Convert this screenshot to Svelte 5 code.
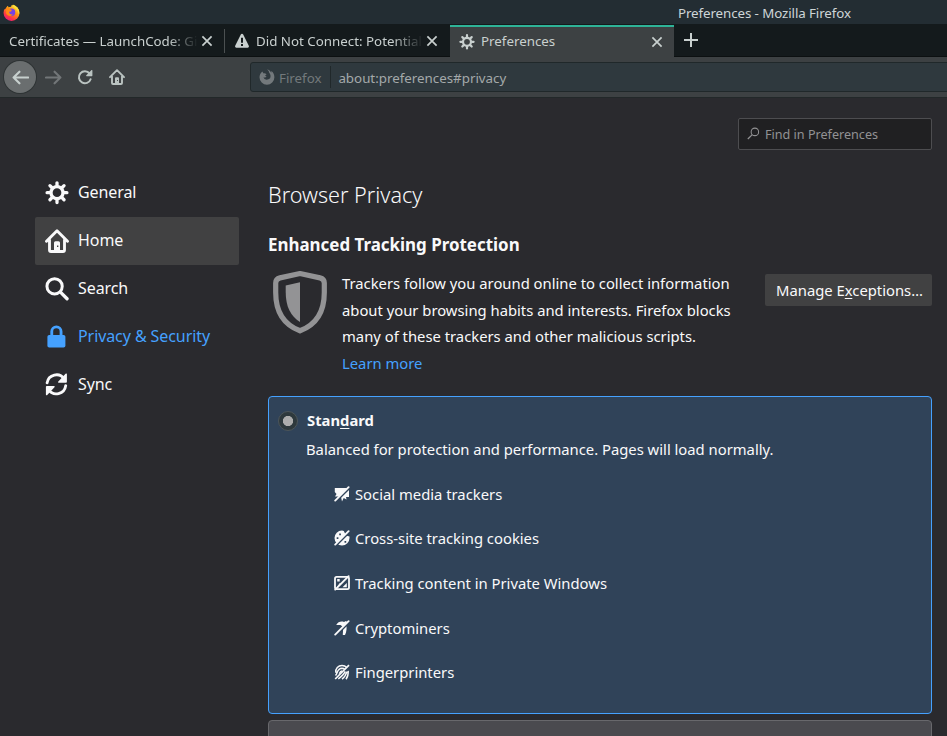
<script>
  const tabs = [
    { title: 'Certificates — LaunchCode: Gi', icon: null, active: false },
    { title: 'Did Not Connect: Potential', icon: 'warning', active: false },
    { title: 'Preferences', icon: 'gear', active: true }
  ];
  const categories = [
    { label: 'General', icon: 'gear' },
    { label: 'Home', icon: 'home', hover: true },
    { label: 'Search', icon: 'search' },
    { label: 'Privacy & Security', icon: 'lock', selected: true },
    { label: 'Sync', icon: 'sync' }
  ];
  const blocked = [
    { label: 'Social media trackers', icon: 'social' },
    { label: 'Cross-site tracking cookies', icon: 'cookie' },
    { label: 'Tracking content in Private Windows', icon: 'content' },
    { label: 'Cryptominers', icon: 'miner' },
    { label: 'Fingerprinters', icon: 'finger' }
  ];
</script>

{#snippet slash()}
  <path d="M15.900 1.300L1.900 15.300" stroke="#304359" stroke-width="2.400" />
  <path d="M14.600 1.200L1.200 14.600" stroke="currentColor" stroke-width="1.900" stroke-linecap="round" />
{/snippet}

{#snippet icon(name, size)}
  <svg class="icon" width={size} height={size} viewBox="0 0 16 16" fill="currentColor" stroke="none">
    {#if name === 'gear'}
      <circle cx="8" cy="7.800" r="4" fill="none" stroke="currentColor" stroke-width="2.200" />
      <path d="M8 1.200v2M8 12.400v2M1.400 7.800h2M12.600 7.800h2M3.300 3.100l1.400 1.400M11.300 11.100l1.400 1.400M3.300 12.500l1.400-1.400M11.300 4.500l1.400-1.400" stroke="currentColor" stroke-width="2.200" stroke-linecap="round" />
    {:else if name === 'home'}
      <path d="M1 8.2L8 1.2l7 7M3 7.2V14a1 1 0 0 0 1 1h8a1 1 0 0 0 1-1V7.2" fill="none" stroke="currentColor" stroke-width="1.9" stroke-linecap="round" stroke-linejoin="round" />
      <path fill-rule="evenodd" d="M6 15V9.2a1 1 0 0 1 1-1h2a1 1 0 0 1 1 1V15zM8 11v1h.9v-1z" />
    {:else if name === 'search'}
      <circle cx="6.4" cy="6.200" r="5.1" fill="none" stroke="currentColor" stroke-width="2" />
      <path d="M10.3 10.1l4.400 4.400" stroke="currentColor" stroke-width="2.2" stroke-linecap="round" />
    {:else if name === 'lock'}
      <path d="M7.700 0" />
      <path d="M4.500 7.600V4.300a3.100 3.100 0 0 1 6.200 0V7.600" fill="none" stroke="currentColor" stroke-width="1.9" />
      <rect x="1.600" y="6.700" width="12" height="8.300" rx="1.2" />
    {:else if name === 'sync'}
      <path d="M1.4 6.600A6.300 6.300 0 0 1 12.800 3.900M13.800 8.400A6.300 6.300 0 0 1 2.400 11.200" fill="none" stroke="currentColor" stroke-width="1.9" stroke-linecap="round" />
      <path d="M14.600.8v5.100a.6.6 0 0 1-.6.6H9.200a.5.5 0 0 1-.3-.9L13.700.5a.5.5 0 0 1 .9.300zM.6 14.300V9.200A.6.6 0 0 1 1.200 8.600H6a.5.5 0 0 1 .3.9L1.500 14.600a.5.5 0 0 1-.9-.300z" />
    {:else if name === 'warning'}
      <path fill-rule="evenodd" d="M6.8 1.6a1.3 1.3 0 0 1 2.4 0l5.6 11.2a1.3 1.3 0 0 1-1.2 1.9H2.4a1.3 1.3 0 0 1-1.2-1.9zM7 4.8v5h2v-5zM7 11.1v2h2v-2z" />
    {:else if name === 'back'}
      <path d="M7 2.5L1.5 8 7 13.5M1.5 8h13.8" fill="none" stroke="currentColor" stroke-width="2" stroke-linecap="round" stroke-linejoin="round" />
    {:else if name === 'forward'}
      <path d="M9 2.5L14.5 8 9 13.5M14.5 8H.9" fill="none" stroke="currentColor" stroke-width="2" stroke-linecap="round" stroke-linejoin="round" />
    {:else if name === 'reload'}
      <path d="M12.6 4.5A6 6 0 1 0 13.6 10.2" fill="none" stroke="currentColor" stroke-width="2" stroke-linecap="round" />
      <path d="M15.4 1.4V6.6a.6.6 0 0 1-.6.6H9.6a.5.5 0 0 1-.3-.9l5.2-5.2a.5.5 0 0 1 .9.3z" />
    {:else if name === 'close'}
      <path d="M3.4 3.4l9.2 9.2M12.6 3.4l-9.2 9.2" stroke="currentColor" stroke-width="1.7" />
    {:else if name === 'plus'}
      <path d="M8 1v14M1 8h14" stroke="currentColor" stroke-width="2" />
    {:else if name === 'brand'}
      <path d="M8 .6C9.6 1.5 10 2.6 10.2 3.7a4.500 4.500 0 0 1 1.300 2.700 3.700 3.700 0 0 1-7.200 1.600C5.200 9 6.800 8.600 7.500 7.400 5.900 7 5.700 6.200 7.600 5.500 6.700 4.500 5.600 4.200 4.600 4.400L3.300 2.500C1.600 4 .5 6 .5 8.300a7.400 7.400 0 0 0 14.900 0c0-2.700-1.300-5.100-3.100-6.300 0 .7.1 1.300-.1 1.800C11.400 2 10 .8 8 .6z" />
    {:else if name === 'magnify'}
      <circle cx="9.7" cy="6" r="4.6" fill="none" stroke="currentColor" stroke-width="1.3" />
      <path d="M6.5 9.3L1 14.8" stroke="currentColor" stroke-width="1.5" />
    {:else if name === 'social'}
      <path d="M.8 2H13.500L6 10.500H1L2.500 8 .8 6zM15 3.500V11h-3l.5 2.500L9.700 12 8 15.500 7 11z" />
      {@render slash()}
    {:else if name === 'cookie'}
      <path fill-rule="evenodd" d="M8 .500A7.500 7.500 0 1 0 15.500 8V6.500L12 5.500 9.800 1zM5.200 3.600V5.300H6.900V3.600zM2.700 7.200V8.900H4.400V7.200zM10.500 11v1.700h1.700v-1.700z" />
      {@render slash()}
    {:else if name === 'content'}
      <path d="M3.200 4h2.500v2.400H3.200zM3 12l3-4.300 1.600 1.600L5 12zM8.500 12.300l4.300-4.300v4.300z" />
      {@render slash()}
      <rect x="1" y="1.800" width="14" height="12.400" rx="1.600" fill="none" stroke="currentColor" stroke-width="1.800" />
    {:else if name === 'miner'}
      <path d="M2.200 5C4 1.800 7 1 10 2l2-.9 1.500 1.400-3.500 5L6.500 5z" />
      <path d="M9.200 6.500l3-2c.7 3.500.5 7-1.200 10.500H8.800z" />
      {@render slash()}
    {:else if name === 'finger'}
      <path d="M1.8 8.6C1.3 4.5 4.2 1.4 8 1.4c2 0 3.600.8 4.800 2.100M1.500 11.400C3.800 9 3 4.500 8 4.300c1.100 0 2 .4 2.600 1M5.400 9.800C6 8.200 6.200 7 8 7M4.300 14.900C8.200 12 10.200 9.800 11.200 7.400M8 15.200c2.500-1.800 4-4.500 4.800-7.600M12 15.300c1.600-2.200 2.400-5 2.200-8.400" fill="none" stroke="currentColor" stroke-width="1.500" />
      <path d="M15 1.200L1.200 15" stroke="currentColor" stroke-width="1.700" />
    {/if}
  </svg>
{/snippet}

<div class="window">
  <header class="titlebar">
    <svg class="logo" width="17" height="17" viewBox="0 0 16 16">
      <defs>
        <linearGradient id="flame" x1=".85" y1="0" x2=".2" y2="1">
          <stop offset="0" stop-color="#fff44f" /><stop offset=".4" stop-color="#ff980e" />
          <stop offset=".75" stop-color="#ff3647" /><stop offset="1" stop-color="#e31587" />
        </linearGradient>
      </defs>
      <circle cx="8" cy="8.4" r="7.5" fill="url(#flame)" />
      <path d="M0 0h4.2L3 4 1 5zM4.5 0h4L7.6 2.5 5 3z" fill="#232d33" />
      <circle cx="8" cy="7.8" r="3.5" fill="#7542e5" />
      <path d="M3 3.2c1.4.4 2 .4 3.2 1.5L8.3 5.5 7.7 7 5.8 7.3c0 2 1.5 3 3.5 2.5-1.5 2-5 2-6.4-1z" fill="#ff8a16" />
      <path d="M9.2.4c4.2 1.5 6.7 5 6 9.4-.5-1-1-3-2-4.2C12.4 4 9.4 3.5 9.2.4z" fill="#ffde38" />
    </svg>
    <span>Preferences - Mozilla Firefox</span>
  </header>

  <div class="tabs">
    {#each tabs as tab}
      <div class="tab" class:active={tab.active}>
        {#if tab.icon}{@render icon(tab.icon, 16)}{/if}
        <span class="tab-title">{tab.title}</span>
        <span class="close">{@render icon('close', 16)}</span>
      </div>
    {/each}
    <div class="newtab">{@render icon('plus', 16)}</div>
  </div>

  <nav class="toolbar">
    <div class="back">{@render icon('back', 17)}</div>
    <div class="forward">{@render icon('forward', 17)}</div>
    <div class="tool">{@render icon('reload', 16)}</div>
    <div class="tool">{@render icon('home', 16)}</div>
    <div class="urlbar">
      <div class="identity">{@render icon('brand', 16)}<span>Firefox</span></div>
      <span class="url">about:preferences#privacy</span>
    </div>
  </nav>

  <div class="page">
    <aside>
      {#each categories as c}
        <div class="category" class:hover={c.hover} class:selected={c.selected}>
          {@render icon(c.icon, 24)}<span>{c.label}</span>
        </div>
      {/each}
    </aside>
    <main>
      <div class="find">{@render icon('magnify', 13)}<span>Find in Preferences</span></div>
      <h1>Browser Privacy</h1>
      <h2>Enhanced Tracking Protection</h2>
      <section class="intro">
        <svg width="54" height="64" viewBox="0 0 54 64" fill="#939395">
          <path d="M27 3.500L47 7.900Q51.300 8.900 51.300 13V22.500C51.300 42.500 42.500 55 27 60.800 11.500 55 2.700 42.500 2.700 22.500V13Q2.700 8.900 7 7.900Z" fill="none" stroke="#939395" stroke-width="5.200" stroke-linejoin="round" />
          <path d="M27 12.300L12.700 15.500V22C12.700 37 18 46.500 27 52z" />
        </svg>
        <p>
          Trackers follow you around online to collect information<br />
          about your browsing habits and interests. Firefox blocks<br />
          many of these trackers and other malicious scripts.<br />
          <a href="#learn">Learn more</a>
        </p>
        <button>Manage E<u>x</u>ceptions…</button>
      </section>
      <section class="card">
        <div class="option"><span class="radio"></span><strong>Stan<u>d</u>ard</strong></div>
        <div class="summary">Balanced for protection and performance. Pages will load normally.</div>
        <ul>
          {#each blocked as b}
            <li>{@render icon(b.icon, 16)}<span>{b.label}</span></li>
          {/each}
        </ul>
      </section>
      <section class="card next"></section>
    </main>
  </div>
</div>

<style>
  .window {
    width: 947px;
    height: 736px;
    overflow: hidden;
    display: flex;
    flex-direction: column;
    background: #2a2a2e;
    color: #f9f9fa;
    font-family: 'Noto Sans', sans-serif;
    font-size: 14.8px;
    white-space: nowrap;
  }
  .window * { box-sizing: border-box; }
  .icon { flex: none; display: block; }
  .titlebar {
    height: 24px;
    flex: none;
    display: flex;
    align-items: center;
    padding: 1px 0 0 3px;
    background: #232d33;
    color: #ced5d7;
    font-size: 13.33px;
    letter-spacing: -.09px;
  }
  .logo { margin-right: 658px; flex: none; }
  .tabs {
    height: 33px;
    flex: none;
    display: flex;
    background: #141a1c;
    border-bottom: 1px solid #0c1011;
    color: #c9d0cf;
    font-size: 13.33px;
  }
  .tab {
    width: 225px;
    flex: none;
    height: 33px;
    display: flex;
    align-items: center;
    padding: 2px 10px 0 9px;
    gap: 6px;
    position: relative;
  }
  .tab:first-child::after {
    content: '';
    position: absolute;
    right: 0;
    top: 5px;
    width: 1px;
    height: 24px;
    background: #4b5051;
  }
  .tab.active {
    width: 224px;
    background: #3d4143;
    border-top: 2px solid #2eb398;
    margin-top: 1px;
    height: 32px;
    padding: 0 9px 0 9px;
  }
  .tab-title { flex: 1; overflow: hidden; padding-bottom: 2px; }
  .tab > .icon { margin-top: -1px; }
  .close { margin-left: -5px; margin-top: -1px; }
  .tab:not(.active) .tab-title {
    mask-image: linear-gradient(to right, #000 calc(100% - 30px), transparent);
  }
  .newtab { padding: 8px 9px; }
  .toolbar {
    height: 41px;
    flex: none;
    display: flex;
    align-items: center;
    background: #3d4143;
    border-bottom: 1px solid #222829;
    color: #bac3c1;
    padding-left: 4px;
  }
  .back {
    width: 32px;
    height: 32px;
    flex: none;
    border-radius: 50%;
    background: #6a6e6f;
    box-shadow: 0 0 0 1px #2e3334;
    display: flex;
    align-items: center;
    justify-content: center;
    color: #c7d0ce;
  }
  .forward { margin-left: 9px; color: #727678; }
  .tool { margin-left: 15px; }
  .tool + .tool { margin-left: 16px; }
  .urlbar {
    margin-left: 125px;
    width: 720px;
    height: 30px;
    flex: none;
    background: #2f393e;
    border: 1px solid #20282a;
    border-radius: 3px;
    display: flex;
    align-items: center;
    font-size: 13.33px;
    color: #a4a9aa;
  }
  .identity {
    height: 22px;
    display: flex;
    align-items: center;
    gap: 4px;
    padding: 0 8px;
    width: 80px;
    color: #73797c;
    border-right: 1px solid #20282a;
  }
  .identity span, .url { padding-top: 2px; }
  .url { padding-left: 7.4px; }
  .page { flex: 1; display: flex; min-height: 0; }
  aside { width: 239px; padding: 71px 0 0 35px; flex: none; }
  .category {
    height: 48px;
    display: flex;
    align-items: center;
    padding: 0 10px;
    gap: 9px;
    border-radius: 2px;
    font-size: 16px;
    letter-spacing: -.08px;
  }
  .category span { padding-bottom: 2px; }
  .category .icon { margin-left: -.5px; margin-right: .5px; }
  .category.hover { background: #414142; }
  .category.selected { color: #45a1ff; }
  main { margin-left: 29px; width: 664px; display: flex; flex-direction: column; }
  .find {
    margin-top: 20px;
    align-self: flex-end;
    width: 194px;
    height: 32px;
    flex: none;
    border: 1px solid #4d4d50;
    border-radius: 2px;
    background: #202022;
    color: #929294;
    display: flex;
    align-items: center;
    gap: 5px;
    padding-left: 8px;
    font-size: 12.6px;
  }
  .find .icon { margin-top: -2px; }
  h1 { margin: 30px 0 0; height: 30px; line-height: 30px; font-size: 21.6px; font-weight: 300; flex: none; }
  h2 { margin: 23px 0 0; height: 24px; line-height: 24px; font-size: 16.93px; font-weight: 700; flex: none; }
  .intro { display: flex; margin-top: 13px; height: 126px; flex: none; padding-left: 5px; }
  .intro p { margin: 0 0 0 15px; line-height: 26.67px; }
  a { color: #45a1ff; text-decoration: none; }
  u { text-underline-offset: 2px; text-decoration-skip-ink: none; }
  button {
    margin: 4px 0 0 auto;
    width: 167px;
    height: 32px;
    border: 0;
    border-radius: 2px;
    background: #414142;
    color: #f9f9fa;
    font: inherit;
    padding: 0 0 0 2px;
  }
  .card {
    height: 318px;
    flex: none;
    border: 1px solid #45a1ff;
    border-radius: 4px;
    background: #304359;
    padding: 14px 0 0 9px;
  }
  .next { margin-top: 6px; background: #4a4a4f; border-color: #68686c; }
  .option { display: flex; align-items: center; gap: 9px; height: 20px; }
  .option strong { padding-bottom: 2px; }
  .radio {
    width: 20px;
    height: 20px;
    border-radius: 50%;
    border: 1px solid #4c5558;
    background: radial-gradient(circle, #adadad 4.8px, #2e393d 5.4px);
  }
  .summary { margin: 8px 0 0 28px; line-height: 20px; }
  ul { list-style: none; margin: 12.5px 0 0 56px; padding: 0; }
  li { display: flex; align-items: center; gap: 5px; height: 44.58px; }
</style>
